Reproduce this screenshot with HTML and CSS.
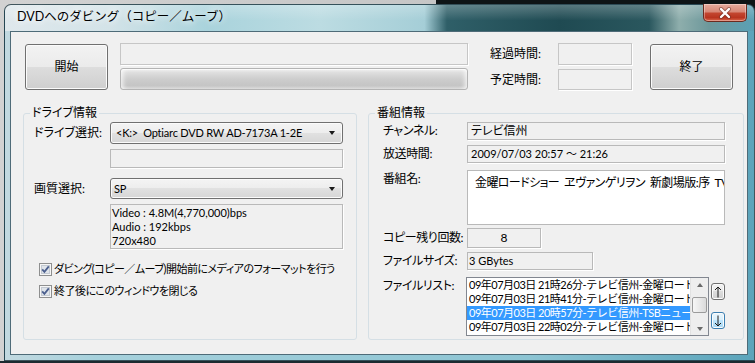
FILE: index.html
```html
<!DOCTYPE html>
<html lang="ja">
<head>
    <meta charset="UTF-8">
    <title>DVDへのダビング（コピー／ムーブ）</title>
    <link rel="stylesheet" href="styles.css">
</head>
<body>
    <div class="window">
        <div class="titlebar">
            <span class="title">DVDへのダビング（コピー／ムーブ）</span>
            <button class="close-btn">
                <svg width="14" height="12" viewBox="0 0 14 12">
                    <path d="M3 2 L11 10 M11 2 L3 10" stroke="#5a2018" stroke-width="4" stroke-linecap="round" opacity=".5"/>
                    <path d="M3 2 L11 10 M11 2 L3 10" stroke="#fff" stroke-width="2.4" stroke-linecap="round"/>
                </svg>
            </button>
        </div>

        <div class="client">
            <div class="top-row">
                <button class="btn btn-big">開始</button>
                <div class="progress-col">
                    <div class="readonly status-box"></div>
                    <div class="progress"></div>
                </div>
                <div class="time-grid">
                    <span>経過時間:</span>
                    <div class="readonly time-box"></div>
                    <span>予定時間:</span>
                    <div class="readonly time-box short"></div>
                </div>
                <button class="btn btn-big btn-end">終了</button>
            </div>

            <div class="groups">
                <fieldset class="group group-drive">
                    <legend>ドライブ情報</legend>
                    <div class="drive-body">
                        <div class="field">
                            <span class="field-label">ドライブ選択:</span>
                            <div class="combo">&lt;K:&gt;&nbsp; Optiarc DVD RW AD-7173A 1-2E<span class="combo-arrow"></span></div>
                        </div>
                        <div class="field indent sub-row">
                            <div class="readonly sub-box"></div>
                        </div>
                        <div class="field quality-row">
                            <span class="field-label">画質選択:</span>
                            <div class="combo combo-short">SP<span class="combo-arrow"></span></div>
                        </div>
                        <div class="field indent sub-row">
                            <div class="readonly info-box">Video : 4.8M(4,770,000)bps<br>Audio : 192kbps<br>720x480</div>
                        </div>
                        <div class="checks">
                            <label class="check">
                                <svg width="13" height="13" viewBox="0 0 13 13">
                                    <rect x="0.5" y="0.5" width="12" height="12" fill="#f6f6f6" stroke="#8e8f8f"/>
                                    <rect x="2.5" y="2.5" width="8" height="8" fill="#dfe4ea" stroke="#c3c9d1"/>
                                    <path d="M3.2 6.3 L5.4 8.8 L9.8 3.4" fill="none" stroke="#4b5f8e" stroke-width="1.8"/>
                                </svg>
                                <span>ダビング(コピー／ムーブ)開始前にメディアのフォーマットを行う</span>
                            </label>
                            <label class="check">
                                <svg width="13" height="13" viewBox="0 0 13 13">
                                    <rect x="0.5" y="0.5" width="12" height="12" fill="#f6f6f6" stroke="#8e8f8f"/>
                                    <rect x="2.5" y="2.5" width="8" height="8" fill="#dfe4ea" stroke="#c3c9d1"/>
                                    <path d="M3.2 6.3 L5.4 8.8 L9.8 3.4" fill="none" stroke="#4b5f8e" stroke-width="1.8"/>
                                </svg>
                                <span>終了後にこのウィンドウを閉じる</span>
                            </label>
                        </div>
                    </div>
                </fieldset>

                <fieldset class="group group-program">
                    <legend>番組情報</legend>
                    <div class="program-body">
                        <div class="field">
                            <span class="label-wide">チャンネル:</span>
                            <div class="readonly value-box">テレビ信州</div>
                        </div>
                        <div class="field row-broadcast">
                            <span class="label-wide">放送時間:</span>
                            <div class="readonly value-box small-text">2009/07/03 20:57 〜 21:26</div>
                        </div>
                        <div class="field field-top row-name">
                            <span class="label-wide">番組名:</span>
                            <div class="name-box">金曜ロードショー&nbsp; ヱヴァンゲリヲン&nbsp; 新劇場版&#8202;:&#8202;序&nbsp; TV版</div>
                        </div>
                        <div class="field row-copy">
                            <span class="label-wide">コピー残り回数:</span>
                            <div class="readonly copy-box">8</div>
                        </div>
                        <div class="field row-size">
                            <span class="label-wide">ファイルサイズ:</span>
                            <div class="readonly size-box small-text">3 GBytes</div>
                        </div>
                        <div class="field field-top row-files">
                            <span class="label-wide">ファイルリスト:</span>
                            <div class="listbox">
                                <div class="list-items">
                                    <div class="list-item">09年07月03日 21時26分-テレビ信州-金曜ロードショー</div>
                                    <div class="list-item">09年07月03日 21時41分-テレビ信州-金曜ロードショー</div>
                                    <div class="list-item selected">09年07月03日 20時57分-テレビ信州-TSBニュース</div>
                                    <div class="list-item">09年07月03日 22時02分-テレビ信州-金曜ロードショー</div>
                                    <div class="list-item">09年07月03日 22時33分-テレビ信州-金曜ロードショー</div>
                                </div>
                                <div class="scrollbar">
                                    <span class="arrow arrow-up"></span>
                                    <span class="thumb"></span>
                                    <span class="arrow arrow-down"></span>
                                </div>
                            </div>
                            <div class="move-buttons">
                                <button class="btn move-btn">
                                    <svg width="8" height="12" viewBox="0 0 8 12"><path d="M4 11.5V1 M1 4 L4 1 L7 4" fill="none" stroke="#1a1a1a"/></svg>
                                </button>
                                <button class="btn move-btn focused">
                                    <svg width="8" height="12" viewBox="0 0 8 12"><path d="M4 0.5V11 M1 8 L4 11 L7 8" fill="none" stroke="#1a1a1a"/></svg>
                                </button>
                            </div>
                        </div>
                    </div>
                </fieldset>
            </div>
        </div>
    </div>
</body>
</html>
```

FILE: styles.css
```css
/* ベース */
* {
    box-sizing: border-box;
}

body {
    margin: 0;
    width: 755px;
    height: 363px;
    overflow: hidden;
    padding: 4px 0 0 4px;
    background:
        linear-gradient(to bottom, transparent 361px, #1c2a30 361px),
        linear-gradient(to right, #d2d2d2 0, #c6c6c6 436px, #0e1416 436px);
    font-family: Lato, "Noto Sans CJK JP", sans-serif;
    font-size: 12px;
    line-height: 14px;
    color: #000;
    font-feature-settings: "palt";
}

button {
    font: inherit;
    color: inherit;
    padding: 0;
}

/* ウィンドウ枠 (Aero) */
.window {
    width: 751px;
    height: 357px;
    border: 1px solid rgba(20, 40, 48, 0.75);
    border-radius: 7px 7px 0 0;
    padding: 0 6px 5px 5px;
    display: flex;
    flex-direction: column;
    background:
        linear-gradient(to bottom, rgba(255, 255, 255, 0.25), rgba(255, 255, 255, 0) 60%) 0 0 / 100% 26px no-repeat,
        linear-gradient(to right, #dfe8ec 0%, #d3e3e8 14%, #a9d3dc 27%, #bcdce2 42%, #a5ced7 56%, #2f5f68 59%, #1f4a52 74%, #2a575e 86%, #8eaeac 90%, #6d989b 94%, #5aa0b5 100%) 0 0 / 100% 26px no-repeat,
        linear-gradient(to right, #c2d9e0, #a6d1dc 12%, #8cc4d3 70%, #5ba4bb);
}

.titlebar {
    height: 26px;
    display: flex;
    align-items: flex-start;
}

.title {
    padding: 5px 0 0 7px;
    font-size: 12.5px;
    font-feature-settings: normal;
    text-shadow: 0 0 6px #fff, 0 0 10px #fff;
}

.close-btn {
    margin: -1px 1px 0 auto;
    width: 44px;
    height: 18px;
    border: 1px solid #6b2a1f;
    border-top: none;
    border-radius: 0 0 5px 5px;
    background: linear-gradient(to bottom, #e6ab9d 0%, #d88877 45%, #c2452f 55%, #b8341f 80%, #d9674c 100%);
    box-shadow: inset 0 0 0 1px rgba(255, 255, 255, 0.35);
    display: flex;
    align-items: center;
    justify-content: center;
}

.client {
    flex: 1;
    border: 1px solid #4e6b78;
    background: #f0f0f0;
}

/* 共通コントロール */
.btn {
    border: 1px solid #707070;
    border-radius: 3px;
    background: linear-gradient(to bottom, #f2f2f2 0%, #ebebeb 49%, #dddddd 50%, #cfcfcf 100%);
    box-shadow: inset 0 0 0 1px #fbfbfb;
}

.readonly {
    border: 1px solid #b9b9b9;
    background: #f0f0f0;
    box-shadow: 1px 1px 0 #fff;
}

.small-text {
    font-size: 11px;
}

.combo {
    width: 233px;
    height: 22px;
    border: 1px solid #707070;
    border-radius: 3px;
    background: linear-gradient(to bottom, #f4f4f4 0%, #ededed 49%, #e1e1e1 50%, #d6d6d6 100%);
    box-shadow: inset 0 0 0 1px #fbfbfb;
    display: flex;
    align-items: center;
    padding: 0 7px 0 5px;
    font-size: 11px;
    letter-spacing: -0.2px;
    font-feature-settings: normal;
}

.combo-short {
    height: 21px;
    padding-left: 3px;
}

.combo-arrow {
    margin-left: auto;
    border-left: 3.5px solid transparent;
    border-right: 3.5px solid transparent;
    border-top: 4px solid #1a1a1a;
}

/* 上段 */
.top-row {
    display: flex;
    align-items: flex-start;
    padding: 11px 13px 0 14px;
}

.btn-big {
    width: 83px;
    height: 46px;
    margin-top: 1px;
    flex: none;
}

.btn-end {
    margin-left: 18px;
}

.progress-col {
    width: 348px;
    margin-left: 12px;
    display: flex;
    flex-direction: column;
    gap: 3px;
}

.status-box {
    height: 22px;
    border-color: #c6c6c6;
}

.progress {
    height: 22px;
    border: 1px solid #b4b4b4;
    border-radius: 3px;
    background: linear-gradient(to bottom, #f2f2f2 0%, #dedede 18%, #cdcdcd 50%, #c5c5c5 82%, #d8d8d8 100%);
    box-shadow: inset 5px 0 5px -3px rgba(255, 255, 255, 0.8), inset -5px 0 5px -3px rgba(255, 255, 255, 0.8), inset 0 1px 0 #fafafa;
}

.time-grid {
    margin-left: 22px;
    display: grid;
    grid-template-columns: 68px 74px;
    row-gap: 4px;
    align-items: center;
}

.time-box {
    height: 22px;
    border-color: #c6c6c6;
}

.time-box.short {
    height: 21px;
}

/* グループ */
.groups {
    display: flex;
    gap: 11px;
    margin: 16px 0 0 12px;
}

.group {
    height: 234px;
    margin: 0;
    padding: 2px 0 0;
    border: 1px solid #d5dfe5;
    border-radius: 3px;
    min-width: 0;
}

.group legend {
    margin-left: 6px;
    padding: 0 2px;
    line-height: 14px;
}

.group-drive {
    width: 334px;
}

.group-program {
    width: 376px;
}

.drive-body {
    padding-left: 10px;
}

.program-body {
    padding: 0 18px 0 14px;
}

.field {
    display: flex;
    align-items: center;
}

.field-top {
    align-items: flex-start;
}

.field-top .label-wide {
    padding-top: 2px;
}

.field-label {
    width: 76px;
    flex: none;
}

.label-wide {
    width: 84px;
    flex: none;
    letter-spacing: -0.4px;
}

.indent {
    padding-left: 76px;
}

.sub-row {
    margin-top: 5px;
}

.quality-row {
    margin-top: 10px;
}

.sub-box {
    width: 233px;
    height: 19px;
}

.info-box {
    width: 233px;
    height: 45px;
    padding: 1px 0 0 1px;
    font-size: 11px;
    font-feature-settings: normal;
}

.checks {
    margin: 13px 0 0 5px;
    display: flex;
    flex-direction: column;
    gap: 8px;
}

.check {
    display: flex;
    align-items: center;
    gap: 2px;
    height: 14px;
    white-space: nowrap;
    font-size: 11px;
    letter-spacing: -0.5px;
}

.check svg {
    flex: none;
}

/* 番組情報 */
.value-box {
    flex: 1;
    height: 18px;
    padding: 1px 3px 0;
}

.row-broadcast {
    margin-top: 5px;
}

.row-name {
    margin-top: 7px;
}

.name-box {
    flex: 1;
    min-width: 0;
    height: 55px;
    border: 1px solid #b9b9b9;
    background: #fff;
    padding: 5px 3px 0 7px;
    white-space: nowrap;
    overflow: hidden;
    letter-spacing: -0.6px;
}

.row-copy {
    margin-top: 3px;
}

.copy-box {
    width: 74px;
    height: 20px;
    padding-top: 2px;
    text-align: center;
}

.row-size {
    margin-top: 4px;
}

.size-box {
    width: 126px;
    height: 18px;
    padding: 1px 1px 0;
}

.row-files {
    margin-top: 7px;
}

.listbox {
    width: 251px;
    height: 59px;
    margin-left: -1px;
    border: 1px solid #828790;
    background: #fff;
    display: flex;
    overflow: hidden;
}

.list-items {
    flex: 1;
    min-width: 0;
    overflow: hidden;
    font-size: 11px;
    letter-spacing: -0.5px;
    font-feature-settings: normal;
}

.list-item {
    height: 14px;
    line-height: 14px;
    padding-left: 2px;
    white-space: nowrap;
    overflow: hidden;
}

.list-item.selected {
    background: #3399ff;
    color: #fff;
}

.scrollbar {
    width: 18px;
    flex: none;
    background: #eeeeee;
    border-left: 1px solid #e2e2e2;
    display: flex;
    flex-direction: column;
    align-items: center;
    padding: 5px 0 4px;
}

.arrow {
    border-left: 3.5px solid transparent;
    border-right: 3.5px solid transparent;
}

.arrow-up {
    border-bottom: 4px solid #6a6a6a;
}

.arrow-down {
    margin-top: auto;
    border-top: 4px solid #6a6a6a;
}

.thumb {
    width: 15px;
    height: 16px;
    margin-top: 10px;
    border: 1px solid #9b9b9b;
    border-radius: 2px;
    background: linear-gradient(to right, #f6f6f6, #e9e9e9 50%, #dadada);
}

.move-buttons {
    margin: 6px 0 0 2px;
    display: flex;
    flex-direction: column;
    gap: 12px;
}

.move-btn {
    width: 14px;
    height: 17px;
    display: flex;
    align-items: center;
    justify-content: center;
}

.move-btn.focused {
    border-color: #3c7fb1;
    background: linear-gradient(to bottom, #eaf6fd 0%, #d9f0fc 49%, #bee6fd 50%, #a7d9f5 100%);
}
```
